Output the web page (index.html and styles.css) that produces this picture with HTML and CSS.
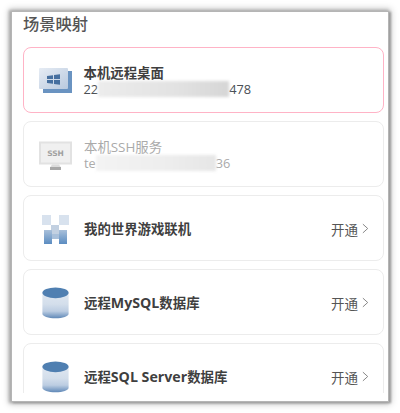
FILE: index.html
```html
<!DOCTYPE html>
<html lang="zh">
<head>
<meta charset="utf-8">
<title>场景映射</title>
<link rel="stylesheet" href="styles.css">
</head>
<body>
<svg class="defs" width="0" height="0" aria-hidden="true">
  <defs>
    <linearGradient id="panel" x1="0" y1="0" x2="1" y2="1">
      <stop offset="0" stop-color="#e6ecf4"/>
      <stop offset="1" stop-color="#b9c9de"/>
    </linearGradient>
    <linearGradient id="drum" x1="0" y1="0" x2="0" y2="1">
      <stop offset="0" stop-color="#dfe7f1"/>
      <stop offset=".45" stop-color="#d3deeb"/>
      <stop offset=".72" stop-color="#bccde2"/>
      <stop offset="1" stop-color="#5f88b7"/>
    </linearGradient>
    <linearGradient id="legs" x1="0" y1="0" x2="0" y2="1">
      <stop offset="0" stop-color="#a9c0da"/>
      <stop offset="1" stop-color="#5b8cc1"/>
    </linearGradient>
    <symbol id="db" viewBox="0 0 34 34">
      <path d="M3.500 7h27v21.500c0 2.600-6 4.800-13.500 4.800S3.500 31.100 3.500 28.500z" fill="url(#drum)"/>
      <ellipse cx="17" cy="7" rx="13.500" ry="5.500" fill="#4f7fb1"/>
    </symbol>
  </defs>
</svg>
<main class="frame">
  <div class="content">
    <h1 class="heading">场景映射</h1>
    <div class="list">
      <section class="card card-active">
        <svg class="icon" viewBox="0 0 33 33" aria-hidden="true">
          <rect x="4" y="7" width="29" height="22" fill="#6a93c1"/>
          <rect x="0" y="4" width="29" height="21" rx="1" fill="url(#panel)"/>
          <path d="M8 12l6-.8V15H8zM15 11.100l6-.8V15h-6zM8 16h6v3.800l-6-.8zM15 16h6v4.700l-6-.8z" fill="#466f9f"/>
        </svg>
        <div class="text">
          <div class="name">本机远程桌面</div>
          <div class="addr">22<span class="mask mask-a"></span>478</div>
        </div>
      </section>
      <section class="card card-off">
        <svg class="icon" viewBox="0 0 33 33" aria-hidden="true">
          <rect x="1" y="4.500" width="31" height="21" fill="#f0f0f0" stroke="#e2e2e2" stroke-width="2"/>
          <path d="M13 26.500h7l2 3H11z" fill="#dcdcdc"/>
          <rect x="11" y="29" width="11" height="3" fill="#a8a8a8"/>
          <text class="ssh" x="16.500" y="18" text-anchor="middle">SSH</text>
        </svg>
        <div class="text">
          <div class="name name-off">本机SSH服务</div>
          <div class="addr addr-off">te<span class="mask mask-b"></span>36</div>
        </div>
      </section>
      <section class="card">
        <svg class="icon" viewBox="0 0 33 33" aria-hidden="true">
          <rect x="3" y="3" width="9" height="10" fill="#d8e2ee"/>
          <rect x="20" y="3" width="10" height="10" fill="#d8e2ee"/>
          <rect x="12" y="13" width="8" height="9" fill="#c2d0e1"/>
          <rect x="5" y="18" width="8" height="14" fill="url(#legs)"/>
          <rect x="20" y="18" width="8" height="14" fill="url(#legs)"/>
          <rect x="13" y="22" width="7" height="5" fill="#a9c0da"/>
        </svg>
        <div class="text"><div class="name">我的世界游戏联机</div></div>
        <div class="action">开通<svg class="chev" viewBox="0 0 8 12" aria-hidden="true"><path d="M1 1l5.500 5L1 11"/></svg></div>
      </section>
      <section class="card">
        <svg class="icon" viewBox="0 0 34 34" aria-hidden="true"><use href="#db"/></svg>
        <div class="text"><div class="name">远程<span class="latin">MySQL</span>数据库</div></div>
        <div class="action">开通<svg class="chev" viewBox="0 0 8 12" aria-hidden="true"><path d="M1 1l5.500 5L1 11"/></svg></div>
      </section>
      <section class="card">
        <svg class="icon" viewBox="0 0 34 34" aria-hidden="true"><use href="#db"/></svg>
        <div class="text"><div class="name">远程<span class="latin">SQL Server</span>数据库</div></div>
        <div class="action">开通<svg class="chev" viewBox="0 0 8 12" aria-hidden="true"><path d="M1 1l5.500 5L1 11"/></svg></div>
      </section>
    </div>
  </div>
</main>
</body>
</html>
```
FILE: styles.css
```css
html, body {
  margin: 0;
  padding: 0;
  height: 413px;
  overflow: hidden;
  background: #fff;
}
body {
  padding: 12px;
  box-sizing: border-box;
  font-family: "Open Sans", "Noto Sans CJK SC", sans-serif;
}
.defs {
  position: absolute;
}
.frame {
  height: 389px;
  box-sizing: border-box;
  padding: 0 4px 8px 11px;
  background: #fff;
  box-shadow: 0 0 0 1px #b5b5b5, 2px 1px 2px 1px #9d9d9d, -1px 0 3px 2px #a8a8a8, 0 0 7px 3px #c8c8c8;
}
.content {
  height: 100%;
  overflow: hidden;
}
.heading {
  margin: 0;
  height: 35px;
  font-family: "Noto Sans CJK SC", sans-serif;
  font-size: 16.300px;
  line-height: 23px;
  font-weight: 500;
  color: #555;
}
.list {
  display: flex;
  flex-direction: column;
  gap: 8px;
}
.card {
  flex: none;
  display: flex;
  align-items: center;
  gap: 12px;
  height: 66px;
  box-sizing: border-box;
  padding: 0 14px 0 15px;
  border: 1px solid #ececec;
  border-radius: 8px;
}
.card-active {
  border: 1.500px solid #ffb3c6;
  padding-left: 14.500px;
}
.icon {
  flex: none;
  width: 33px;
  height: 33px;
}
.text {
  flex: 1;
  min-width: 0;
  padding-top: 1px;
}
.name {
  font-size: 13.400px;
  line-height: 16px;
  font-weight: 700;
  color: #3f3f3f;
  white-space: nowrap;
}
.latin {
  font-size: 14.200px;
}
.name-off {
  font-weight: 400;
  color: #aaa;
}
.addr {
  font-size: 12.800px;
  line-height: 16px;
  color: #4a4f55;
  white-space: nowrap;
}
.addr-off {
  color: #aaa;
}
.mask {
  display: inline-block;
  height: 16px;
  vertical-align: top;
  filter: blur(1.500px);
}
.mask-a {
  width: 131px;
  background: linear-gradient(90deg, #ececec, #e2e2e2 60%, #d6d6d6);
}
.mask-b {
  width: 120px;
  background: linear-gradient(90deg, #f3f3f3, #ededed 60%, #e6e6e6);
}
.ssh {
  font-family: "DejaVu Sans", sans-serif;
  font-size: 7.500px;
  font-weight: 700;
  fill: #a0a0a0;
}
.action {
  flex: none;
  display: flex;
  align-items: center;
  gap: 4px;
  padding-top: 1px;
  font-family: "Noto Sans CJK SC", sans-serif;
  font-size: 13.500px;
  color: #555;
}
.chev {
  width: 7px;
  height: 11px;
  fill: none;
  stroke: #777;
  stroke-width: 1;
}
```
